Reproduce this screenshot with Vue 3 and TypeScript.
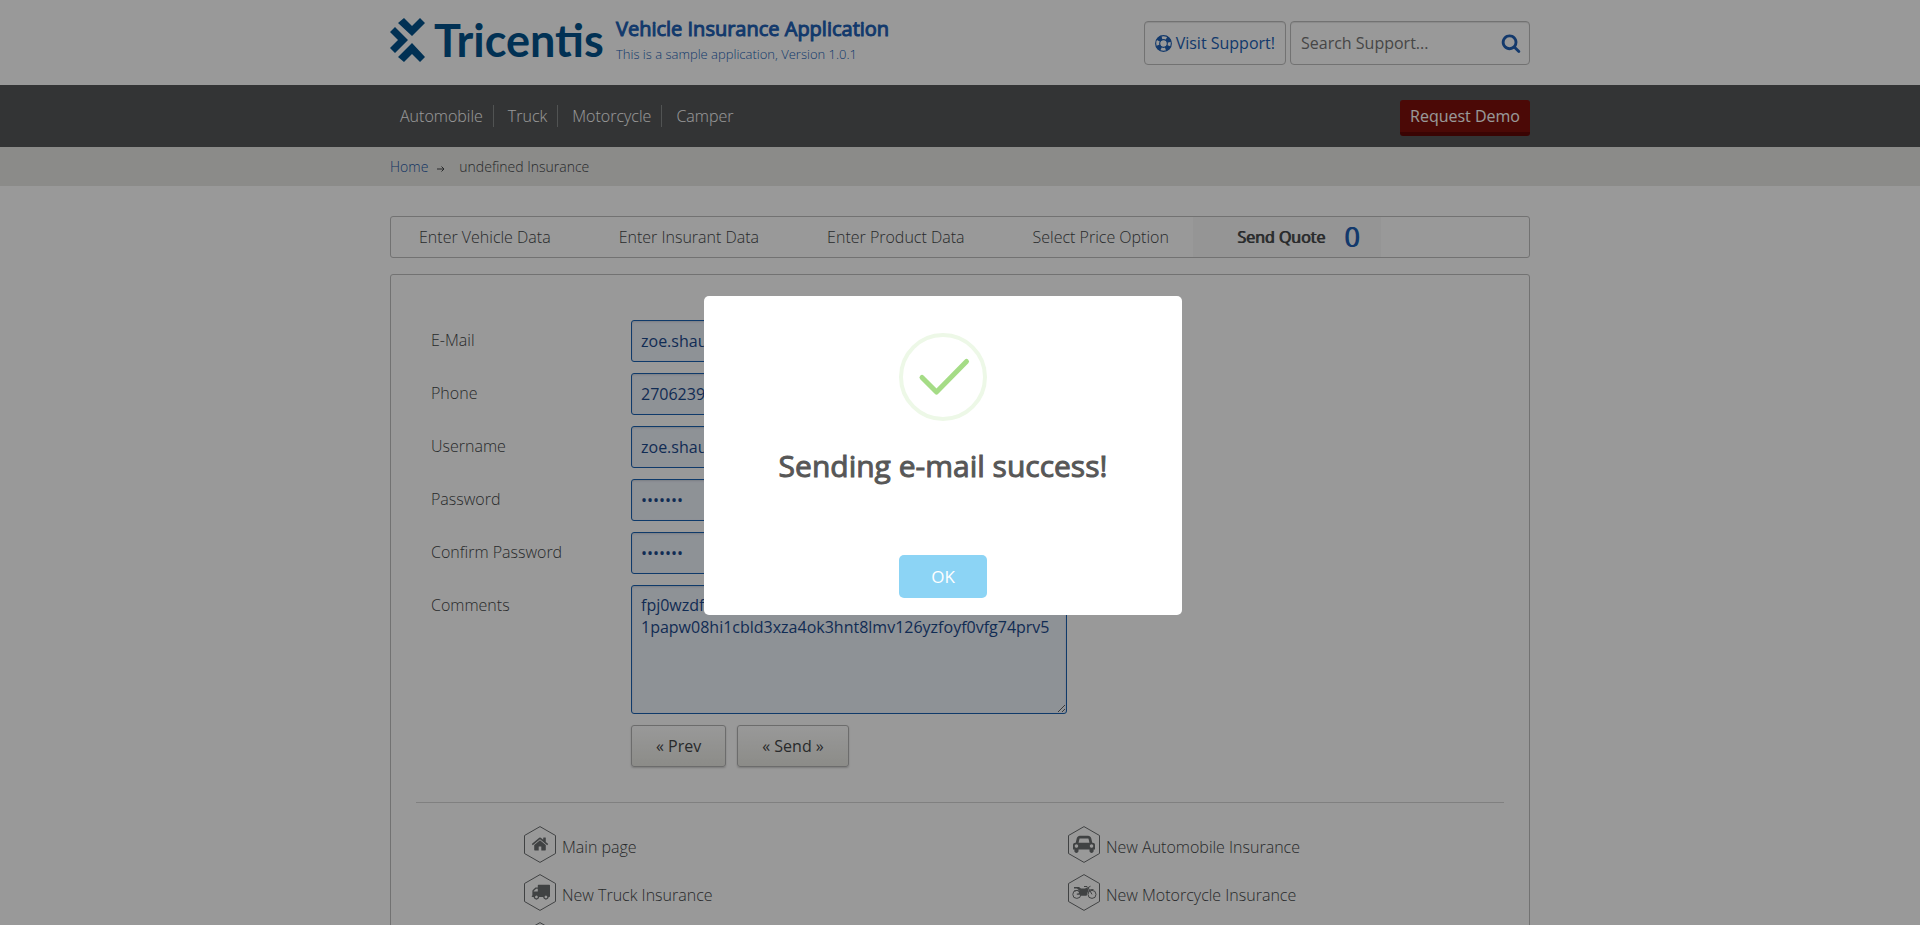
<script setup lang="ts">
import { ref } from 'vue'

type IconName = 'home' | 'car' | 'truck' | 'motorcycle' | 'camper'

interface Field {
  id: string
  label: string
  type: string
  value: string
}

const products = ['Automobile', 'Truck', 'Motorcycle', 'Camper']

const steps = [
  'Enter Vehicle Data',
  'Enter Insurant Data',
  'Enter Product Data',
  'Select Price Option',
]

const fields = ref<Field[]>([
  { id: 'email', label: 'E-Mail', type: 'text', value: 'zoe.shau' },
  { id: 'phone', label: 'Phone', type: 'text', value: '2706239' },
  { id: 'username', label: 'Username', type: 'text', value: 'zoe.shau' },
  { id: 'password', label: 'Password', type: 'password', value: 'abcdefg' },
  { id: 'confirm', label: 'Confirm Password', type: 'password', value: 'abcdefg' },
])

const comments = ref('fpj0wzdf\n1papw08hi1cbld3xza4ok3hnt8lmv126yzfoyf0vfg74prv5')

const links: { label: string; icon: IconName }[] = [
  { label: 'Main page', icon: 'home' },
  { label: 'New Automobile Insurance', icon: 'car' },
  { label: 'New Truck Insurance', icon: 'truck' },
  { label: 'New Motorcycle Insurance', icon: 'motorcycle' },
  { label: 'New Camper Insurance', icon: 'camper' },
]

const search = ref('')
const dialogOpen = ref(true)
</script>

<template>
  <div class="page">
    <header class="top">
      <div class="container top-row">
        <a class="logo" href="#" aria-label="Tricentis">
          <svg class="logo-mark" viewBox="0 0 35 44" aria-hidden="true">
            <path d="M14 0L22 8L30 0L35 5L22 18L8 5Z" />
            <path d="M5 9L18 22L5 35L0 30L8 22L0 14Z" />
            <path d="M22 25L35 39L30 44L22 36L14 44L8 39Z" />
          </svg>
          <span class="logo-word">Tricentis</span>
        </a>
        <div class="titles">
          <h1>Vehicle Insurance Application</h1>
          <p>This is a sample application, Version 1.0.1</p>
        </div>
        <div class="support">
          <a class="support-link" href="#">
            <svg class="ring" viewBox="0 0 16 16" aria-hidden="true">
              <circle cx="8" cy="8" r="7.4" fill="none" stroke="currentColor" stroke-width="1.1" />
              <circle cx="8" cy="8" r="3.6" fill="none" stroke="currentColor" stroke-width="1.1" />
              <circle cx="8" cy="8" r="5.5" fill="none" stroke="currentColor" stroke-width="4" stroke-dasharray="4.3 4.34" stroke-dashoffset="-2.17" />
            </svg>
            Visit Support!
          </a>
          <form class="search" @submit.prevent>
            <input v-model="search" type="text" placeholder="Search Support..." aria-label="Search Support" />
            <button type="submit" aria-label="Search">
              <svg viewBox="0 0 1792 1792" aria-hidden="true">
                <path d="M1216 832q0-185-131.500-316.500t-316.500-131.500-316.500 131.500-131.500 316.500 131.500 316.500 316.500 131.500 316.500-131.500 131.500-316.500zm512 832q0 52-38 90t-90 38q-54 0-90-38l-343-342q-179 124-399 124-143 0-273.500-55.500t-225-150-150-225-55.500-273.500 55.500-273.500 150-225 225-150 273.500-55.500 273.500 55.500 225 150 150 225 55.500 273.500q0 220-124 399l343 343q37 37 37 90z" />
              </svg>
            </button>
          </form>
        </div>
      </div>
    </header>

    <nav class="main-nav" aria-label="Products">
      <div class="container nav-row">
        <ul>
          <li v-for="p in products" :key="p"><a href="#">{{ p }}</a></li>
        </ul>
        <a class="demo" href="#">Request Demo</a>
      </div>
    </nav>

    <div class="crumbs">
      <div class="container crumb-row">
        <a href="#">Home</a>
        <svg class="arrow" viewBox="0 0 8 6" aria-hidden="true">
          <path d="M0 3H7M4.500 .5L7 3L4.500 5.500" fill="none" stroke="currentColor" />
        </svg>
        <span>undefined Insurance</span>
      </div>
    </div>

    <main class="container content">
      <ul class="steps">
        <li v-for="s in steps" :key="s"><a href="#">{{ s }}</a></li>
        <li class="active"><a href="#">Send Quote</a><span class="count">0</span></li>
      </ul>

      <section class="panel">
        <form class="form" @submit.prevent>
          <div v-for="f in fields" :key="f.id" class="row">
            <label :for="f.id">{{ f.label }}</label>
            <input :id="f.id" v-model="f.value" :type="f.type" />
          </div>
          <div class="row">
            <label for="comments">Comments</label>
            <textarea id="comments" v-model="comments" spellcheck="false"></textarea>
          </div>
          <div class="actions">
            <button type="button">« Prev</button>
            <button type="submit">« Send »</button>
          </div>
        </form>

        <ul class="links">
          <li v-for="l in links" :key="l.label">
            <a href="#">
              <svg class="hex" viewBox="0 0 32 37" aria-hidden="true">
                <path class="outline" d="M16 .6L31.500 9.500V27.500L16 36.400L.5 27.500V9.500Z" />
                <svg v-if="l.icon === 'home'" x="7" y="9" width="18" height="18" viewBox="0 0 1792 1792">
                  <path d="M1472 992v480q0 26-19 45t-45 19h-384v-384h-256v384h-384q-26 0-45-19t-19-45v-480q0-1 .5-3t.5-3l575-474 575 474q1 2 1 6zm223-69l-62 74q-8 9-21 11h-3q-13 0-21-7l-692-577-692 577q-12 8-24 7-13-2-21-11l-62-74q-8-10-7-23.500t11-21.500l719-599q32-26 76-26t76 26l244 204v-195q0-14 9-23t23-9h192q14 0 23 9t9 23v408l219 182q10 8 11 21.500t-7 23.500z" />
                </svg>
                <svg v-else-if="l.icon === 'truck'" x="7" y="8" width="19" height="19" viewBox="0 0 1792 1792">
                  <path d="M640 1408q0-52-38-90t-90-38-90 38-38 90 38 90 90 38 90-38 38-90zm-384-512h384v-256h-158q-13 0-22 9l-195 195q-9 9-9 22v30zm1280 512q0-52-38-90t-90-38-90 38-38 90 38 90 90 38 90-38 38-90zm256-1088v1024q0 15-4 26.500t-13.500 18.500-16.500 11.500-23.500 6-22.500 2-25.500 0-22.500-.5q0 106-75 181t-181 75-181-75-75-181h-384q0 106-75 181t-181 75-181-75-75-181h-64q-3 0-22.500.5t-25.500 0-22.500-2-23.500-6-16.500-11.500-13.500-18.500-4-26.500q0-26 19-45t45-19v-320q0-8-.5-35t0-38 2.500-34.500 6.500-37 14-30.500 22.500-30l198-198q19-19 50.500-32t58.500-13h160v-192q0-26 19-45t45-19h1024q26 0 45 19t19 45z" />
                </svg>
                <svg v-else-if="l.icon === 'car'" x="5" y="8" width="22" height="20" viewBox="0 0 2048 1792">
                  <path d="M480 1088q0-66-47-113t-113-47-113 47-47 113 47 113 113 47 113-47 47-113zm36-320h1016l-89-357q-2-8-14-17.500t-21-9.500h-768q-9 0-21 9.500t-14 17.500zm1372 320q0-66-47-113t-113-47-113 47-47 113 47 113 113 47 113-47 47-113zm160-96v384q0 14-9 23t-23 9h-96v128q0 80-56 136t-136 56-136-56-56-136v-128h-1024v128q0 80-56 136t-136 56-136-56-56-136v-128h-96q-14 0-23-9t-9-23v-384q0-93 65.500-158.500t158.500-65.500h28l105-419q23-94 104-157.500t179-63.500h768q98 0 179 63.500t104 157.500l105 419h28q93 0 158.500 65.500t65.500 158.500z" />
                </svg>
                <g v-else-if="l.icon === 'motorcycle'">
                  <circle class="wheel" cx="8.800" cy="20.400" r="4" />
                  <circle class="wheel" cx="24" cy="20.400" r="4" />
                  <path d="M6 13H11L13 14.400H17L19 13.600L20.600 15.500L18.600 21.800H13L12 20.800H8.800V19.600H10.500L11.500 16.800L9 14.600H6Z" />
                  <path class="line" d="M16 12.500H19L20.200 13.800L24 20.400M19.500 14L22.500 12.200M6 17Q9 15 13 18.500M20 17.500Q22 15 25.500 15.500" />
                </g>
                <path v-else d="M6 12H25V24H6ZM8.500 14.500V18H14V14.500ZM17 14.500V24H21V14.500Z" fill-rule="evenodd" />
              </svg>
              <span>{{ l.label }}</span>
            </a>
          </li>
        </ul>
      </section>
    </main>

    <div v-if="dialogOpen" class="overlay">
      <div class="dialog" role="dialog" aria-modal="true" aria-labelledby="dialog-title">
        <svg class="tick" viewBox="0 0 88 88" aria-hidden="true">
          <circle cx="44" cy="44" r="42" fill="none" stroke="#edf8e7" stroke-width="4" />
          <path d="M23 44.500L37.500 59L67.500 28.500" fill="none" stroke="#a5dc86" stroke-width="5" stroke-linecap="round" stroke-linejoin="round" />
        </svg>
        <h2 id="dialog-title">Sending e-mail success!</h2>
        <button type="button" @click="dialogOpen = false">OK</button>
      </div>
    </div>
  </div>
</template>

<style>
body {
  margin: 0;
}
</style>

<style scoped>
.page {
  height: 100vh;
  overflow: hidden;
  background: #fff;
  color: #444749;
  font: 300 16px/22px "Open Sans", "Noto Sans", sans-serif;
}
.page *,
.page *::before {
  box-sizing: border-box;
}
a {
  color: inherit;
  text-decoration: none;
}
ul {
  margin: 0;
  padding: 0;
  list-style: none;
}
input,
textarea,
button {
  font-family: inherit;
}
.container {
  max-width: 1140px;
  margin: 0 auto;
}

/* header */
.top-row {
  display: flex;
  align-items: flex-start;
  height: 85px;
}
.logo {
  display: flex;
  align-items: center;
  width: 226px;
  height: 44px;
  margin-top: 18px;
  color: #02538c;
}
.logo-mark {
  width: 35px;
  height: 44px;
  margin-right: 9px;
  fill: currentColor;
}
.logo-word {
  font: 700 45px/44px Lato, "Open Sans", sans-serif;
}
.titles {
  padding-top: 15px;
  color: #2060b4;
}
h1,
h2 {
  font-weight: 400;
  -webkit-text-stroke: 1px currentColor;
}
h1 {
  margin: 0;
  font-size: 20px;
  line-height: 28px;
}
.titles p {
  margin: 1px 0 0;
  font-size: 13px;
  line-height: 20px;
}
.support {
  display: flex;
  gap: 4px;
  margin: 21px 0 0 auto;
  font-weight: 400;
}
.support-link {
  display: flex;
  align-items: center;
  gap: 4px;
  height: 44px;
  padding: 0 10px;
  border: 1px solid #bebebe;
  border-radius: 4px;
  box-shadow: inset 0 1px 1px #e6e6e6;
  color: #2060b4;
}
.ring {
  width: 17px;
  height: 17px;
}
.search {
  display: flex;
  align-items: center;
  width: 240px;
  height: 44px;
  border: 1px solid #bebebe;
  border-radius: 4px;
  box-shadow: inset 0 1px 1px #e6e6e6;
}
.search input {
  flex: 1;
  min-width: 0;
  padding: 0 10px;
  border: 0;
  background: none;
  font-size: 16px;
}
.search input::placeholder {
  color: #757575;
}
.search button {
  display: flex;
  padding: 0 8px;
  border: 0;
  background: none;
}
.search svg {
  width: 20px;
  height: 20px;
  fill: #2060b4;
}

/* navigation */
.main-nav {
  background: #555759;
}
.nav-row {
  display: flex;
  align-items: center;
  justify-content: space-between;
  height: 62px;
}
.nav-row ul {
  display: flex;
}
.nav-row li {
  padding: 0 10px;
  color: #fff;
}
.nav-row li + li {
  padding-left: 14px;
  border-left: 1px solid #888a8b;
}
.demo {
  height: 36px;
  margin-top: 4px;
  padding: 5px 10px;
  border-bottom: 4px solid #610805;
  border-radius: 3px;
  background: #7d0f0a;
  color: #fff;
  font-weight: 400;
}
.crumbs {
  background: #e8e8e5;
}
.crumb-row {
  display: flex;
  align-items: center;
  height: 39px;
  font-size: 14px;
}
.crumb-row a {
  color: #1c57a5;
}
.arrow {
  width: 8px;
  height: 6px;
  margin: 5px 14px 0 9px;
}

/* steps */
.content {
  padding-top: 30px;
}
.steps {
  display: flex;
  height: 42px;
  border: 1px solid #bebebe;
  border-radius: 3px;
  line-height: 40px;
}
.steps li {
  padding: 0 24px 0 44px;
}
.steps li:first-child {
  padding-left: 28px;
}
.steps .active {
  display: flex;
  gap: 19px;
  padding-right: 22px;
  background: #f8f8f8;
  font-weight: 400;
  text-shadow: 1px 0 currentColor;
}
.count {
  color: #2060b4;
  font-size: 27px;
}

/* form */
.panel {
  margin-top: 16px;
  padding: 45px 25px 0;
  border: 1px solid #bebebe;
  border-radius: 3px;
}
.form {
  padding: 0 15px 35px;
  border-bottom: 1px solid #d5d5d5;
}
.row {
  display: flex;
  margin-bottom: 11px;
}
.row label {
  flex: 0 0 200px;
  padding-top: 9px;
}
.row input,
.row textarea {
  width: 436px;
  height: 42px;
  margin: 0;
  padding: 0 9px;
  border: 1px solid #1961b1;
  border-radius: 3px;
  background: #edf3fb;
  box-shadow: inset 0 1px 2px #ccd2dc;
  color: #1c4a8c;
  font-size: 16px;
}
.row textarea {
  height: 129px;
  padding-top: 8px;
  line-height: 22px;
}
.actions {
  display: flex;
  gap: 11px;
  padding-left: 200px;
}
.actions button {
  height: 42px;
  padding: 0 24px;
  border: 1px solid #b4b4b4;
  border-radius: 3px;
  background: linear-gradient(#fff, #e9e9e3);
  box-shadow: 0 1px 2px #ccc;
  color: #444749;
  font-size: 16px;
}

/* quick links */
.links {
  display: grid;
  grid-template-columns: 1fr 1fr;
  row-gap: 11px;
  padding-top: 23px;
}
.links li {
  padding-left: 108px;
}
.links a {
  display: flex;
  gap: 6px;
}
.links span {
  padding-top: 10px;
}
.hex {
  width: 32px;
  height: 37px;
  fill: #6c6f71;
}
.outline,
.wheel,
.line {
  fill: none;
  stroke: #6c6f71;
}

/* dialog */
.overlay {
  position: fixed;
  inset: 0;
  display: flex;
  align-items: center;
  justify-content: center;
  padding: 0 34px 14px 0;
  background: rgba(0, 0, 0, 0.4);
}
.dialog {
  display: flex;
  flex-direction: column;
  align-items: center;
  width: 478px;
  padding: 37px 17px 17px;
  border-radius: 5px;
  background: #fff;
}
.tick {
  width: 88px;
  height: 88px;
}
h2 {
  margin: 25px 0 69px;
  color: #575757;
  font-size: 30px;
  line-height: 40px;
}
.dialog button {
  width: 88px;
  height: 43px;
  border: 0;
  border-radius: 5px;
  background: #8cd4f5;
  color: #fff;
  font-size: 17px;
}
</style>
